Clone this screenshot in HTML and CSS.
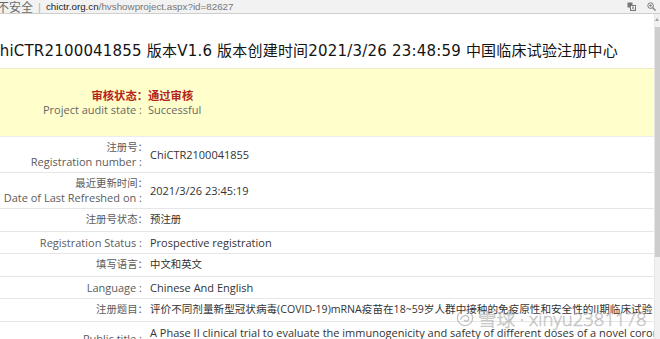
FILE: index.html
```html
<!DOCTYPE html>
<html lang="zh">
<head>
  <meta charset="UTF-8" />
  <title>ChiCTR2100041855</title>
  <link rel="stylesheet" href="styles.css">
</head>
<body>

  <div class="topbar">
    <span class="insecure">不安全</span>
    <span class="sep">|</span>
    <span class="url"><span class="host">chictr.org.cn</span>/hvshowproject.aspx?id=82627</span>
    <span class="tools">
      <svg width="9" height="9" viewBox="0 0 9 9">
        <rect x="0.5" y="0.5" width="5" height="5" fill="#777"/>
        <rect x="3.5" y="3.5" width="5" height="5" fill="#fff" stroke="#777"/>
        <path d="M5 7.5 L6 4.5 L7 7.5" stroke="#777" fill="none" stroke-width="0.8"/>
      </svg>
      <svg width="9" height="9" viewBox="0 0 9 9">
        <circle cx="3.6" cy="3.6" r="2.8" fill="none" stroke="#777" stroke-width="1"/>
        <path d="M5.6 5.6 L8.5 8.5" stroke="#777" stroke-width="1.3"/>
        <path d="M2.2 3.6 H5 M3.6 2.2 V5" stroke="#777" stroke-width="0.8"/>
      </svg>
    </span>
  </div>

  <div class="frame">
    <div class="page">
      <h1>ChiCTR2100041855 版本V1.6 版本创建时间2021/3/26 23:48:59 中国临床试验注册中心</h1>

      <div class="audit">
        <table>
          <tr>
            <td class="label"><span class="zh strong">审核状态：</span></td>
            <td class="value"><span class="zh strong">通过审核</span></td>
          </tr>
          <tr>
            <td class="label"><span class="en">Project audit state :</span></td>
            <td class="value">Successful</td>
          </tr>
        </table>
      </div>

      <table class="info">
        <tr>
          <td class="label"><p class="zh">注册号：</p><p class="en">Registration number :</p></td>
          <td class="value">ChiCTR2100041855</td>
        </tr>
        <tr>
          <td class="label"><p class="zh">最近更新时间：</p><p class="en">Date of Last Refreshed on :</p></td>
          <td class="value">2021/3/26 23:45:19</td>
        </tr>
        <tr>
          <td class="label"><p class="zh">注册号状态：</p></td>
          <td class="value zh">预注册</td>
        </tr>
        <tr>
          <td class="label"><p class="en">Registration Status :</p></td>
          <td class="value">Prospective registration</td>
        </tr>
        <tr>
          <td class="label"><p class="zh">填写语言：</p></td>
          <td class="value zh">中文和英文</td>
        </tr>
        <tr>
          <td class="label"><p class="en">Language :</p></td>
          <td class="value">Chinese And English</td>
        </tr>
        <tr>
          <td class="label"><p class="zh">注册题目：</p></td>
          <td class="value zh title">评价不同剂量新型冠状病毒(COVID-19)mRNA疫苗在18~59岁人群中接种的免疫原性和安全性的II期临床试验</td>
        </tr>
        <tr>
          <td class="label"><p class="en">Public title :</p></td>
          <td class="value">A Phase II clinical trial to evaluate the immunogenicity and safety of different doses of a novel coronavirus (COVID-19) mRNA vaccine in population aged 18-59 years</td>
        </tr>
      </table>

      <div class="watermark">
        <svg width="18" height="18" viewBox="0 0 20 20">
          <circle cx="10" cy="10" r="8.5" fill="none" stroke="rgba(120,120,120,0.45)" stroke-width="1.4"/>
          <path d="M5 12 C7 6, 13 6, 14 10 C15 13, 11 15, 9 12" fill="none" stroke="rgba(120,120,120,0.45)" stroke-width="1.4"/>
        </svg>
        <span>雪球 · xinyu2381178</span>
      </div>
    </div>

    <div class="scrollbar">
      <div class="arrow"></div>
      <div class="thumb"></div>
    </div>
  </div>

</body>
</html>
```

FILE: styles.css
```css
body {
  margin: 0;
  width: 660px;
  height: 339px;
  overflow: hidden;
  background: #ffffff;
  font-family: "Open Sans", "Noto Sans CJK SC", sans-serif;
  font-size: 11px;
  color: #333;
}

.topbar {
  height: 13px;
  background: #f2f2f2;
  border-bottom: 1px solid #cfcfcf;
  display: flex;
  align-items: center;
  margin-left: -3px;
  font-family: "Liberation Sans", "Noto Sans CJK SC", sans-serif;
  font-size: 9.8px;
  color: #6b6b6b;
  white-space: nowrap;
}

.insecure {
  font-size: 12px;
}

.sep {
  color: #b5b5b5;
  font-size: 11px;
  margin: 0 5px 0 5px;
}

.url {
  color: #777;
}

.host {
  color: #222;
}

.tools {
  margin-left: auto;
  margin-right: 4px;
  display: flex;
  gap: 11px;
}

.frame {
  display: flex;
  height: 325px;
}

.page {
  position: relative;
  width: 655px;
  overflow: hidden;
}

h1 {
  font-family: "DejaVu Sans", "Noto Sans CJK SC", sans-serif;
  font-size: 15px;
  font-weight: normal;
  letter-spacing: 0.2px;
  color: #141414;
  line-height: 20px;
  margin: 27px 0 7px -11px;
  white-space: nowrap;
}

.audit {
  background: #ffffcc;
  border-top: 1px solid #ecebc4;
  border-bottom: 1px solid #ececec;
  padding: 20px 0 19px;
}

table {
  border-collapse: collapse;
}

.audit td {
  padding: 0;
  line-height: 14px;
  color: #666;
}

.audit .strong {
  color: #b3241d;
  font-weight: bold;
  font-size: 11.3px;
}

.label {
  width: 148px;
  text-align: right;
  padding: 0;
  color: #5c5c5c;
}

.label p {
  margin: 0;
}

.zh {
  font-size: 10.4px;
}

.en {
  display: inline-block;
  padding-right: 6px;
}

.label p.en {
  display: block;
}

.value {
  padding-left: 2px;
  color: #333;
}

.info {
  width: 760px;
}

.info td {
  border-bottom: 1px solid #e6e6e6;
  padding-top: 4px;
  padding-bottom: 4px;
  line-height: 13.5px;
}

.info td.label {
  padding-right: 0;
}

.info td.value {
  padding-left: 2px;
}

.info td.title {
  font-size: 10.6px;
  white-space: nowrap;
}

.watermark {
  position: absolute;
  left: 456px;
  top: 291px;
  display: flex;
  align-items: center;
  gap: 4px;
  font-family: "Open Sans", "Noto Sans CJK SC", sans-serif;
  font-size: 18.5px;
  font-weight: 300;
  color: rgba(255, 255, 255, 0.5);
  -webkit-text-stroke: 0.6px rgba(120, 120, 120, 0.5);
  white-space: nowrap;
}

.scrollbar {
  width: 5px;
  background: #f1f1f1;
  border-left: 1px solid #e6e6e6;
}

.arrow {
  margin: 4px 0 0 0;
  width: 0;
  height: 0;
  border-left: 2px solid transparent;
  border-right: 2px solid transparent;
  border-bottom: 3px solid #a0a0a0;
}

.thumb {
  margin-top: 6px;
  height: 230px;
  background: #cdcdcd;
}
```
